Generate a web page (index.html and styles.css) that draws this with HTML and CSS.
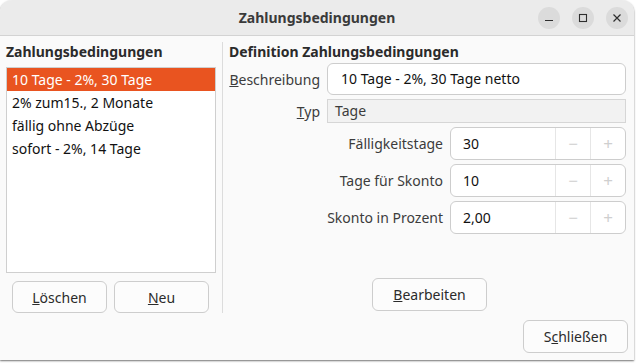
FILE: index.html
```html
<!DOCTYPE html>
<html lang="de">
<head>
    <meta charset="UTF-8">
    <title>Zahlungsbedingungen</title>
    <link rel="stylesheet" href="styles.css">
</head>
<body>
    <div class="window">
        <header class="titlebar">
            <span></span>
            <span class="title">Zahlungsbedingungen</span>
            <div class="wm-buttons">
                <span class="wm-btn">
                    <svg width="10" height="10" viewBox="0 0 10 10"><path d="M1 7.5h8" stroke="#2e2e2e" stroke-width="1.2"/></svg>
                </span>
                <span class="wm-btn">
                    <svg width="10" height="10" viewBox="0 0 10 10"><rect x="1.5" y="1.5" width="7" height="7" fill="none" stroke="#2e2e2e" stroke-width="1.1"/></svg>
                </span>
                <span class="wm-btn">
                    <svg width="10" height="10" viewBox="0 0 10 10"><path d="M1.5 1.5l7 7M8.5 1.5l-7 7" stroke="#2e2e2e" stroke-width="1.2"/></svg>
                </span>
            </div>
        </header>

        <main class="content">
            <div class="panes">
                <section class="pane-left">
                    <h2 class="heading">Zahlungsbedingungen</h2>
                    <ul class="list">
                        <li class="selected">10 Tage - 2%, 30 Tage</li>
                        <li>2% zum15., 2 Monate</li>
                        <li>fällig ohne Abzüge</li>
                        <li>sofort - 2%, 14 Tage</li>
                    </ul>
                    <div class="list-actions">
                        <button class="btn"><u>L</u>öschen</button>
                        <button class="btn"><u>N</u>eu</button>
                    </div>
                </section>

                <div class="separator"></div>

                <section class="pane-right">
                    <h2 class="heading">Definition Zahlungsbedingungen</h2>
                    <div class="form-row">
                        <label class="field-label"><u>B</u>eschreibung</label>
                        <div class="entry">10 Tage - 2%, 30 Tage netto</div>
                    </div>
                    <div class="form-row form-row-small">
                        <label class="field-label"><u>T</u>yp</label>
                        <div class="readonly">Tage</div>
                    </div>

                    <div class="spin-row">
                        <label class="field-label">Fälligkeitstage</label>
                        <div class="spin">
                            <span class="spin-value">30</span>
                            <span class="spin-btn">&minus;</span>
                            <span class="spin-btn">+</span>
                        </div>
                    </div>
                    <div class="spin-row">
                        <label class="field-label">Tage für Skonto</label>
                        <div class="spin">
                            <span class="spin-value">10</span>
                            <span class="spin-btn">&minus;</span>
                            <span class="spin-btn">+</span>
                        </div>
                    </div>
                    <div class="spin-row">
                        <label class="field-label">Skonto in Prozent</label>
                        <div class="spin">
                            <span class="spin-value">2,00</span>
                            <span class="spin-btn">&minus;</span>
                            <span class="spin-btn">+</span>
                        </div>
                    </div>

                    <div class="edit-action">
                        <button class="btn btn-edit"><u>B</u>earbeiten</button>
                    </div>
                </section>
            </div>

            <div class="footer">
                <button class="btn btn-close">S<u>c</u>hließen</button>
            </div>
        </main>
    </div>
</body>
</html>
```

FILE: styles.css
```css
html, body {
    margin: 0;
    padding: 0;
    height: 100%;
    overflow: hidden;
}
body {
    background-color: #ffffff;
    font-family: "Noto Sans", "DejaVu Sans", sans-serif;
    font-size: 14px;
    color: #1e1e1e;
}
.window {
    width: 634px;
    height: 360px;
    display: flex;
    flex-direction: column;
    background-color: #fafafa;
    border-radius: 12px 12px 0 0;
    box-shadow: 0 1px 2px rgba(0, 0, 0, 0.55);
    overflow: hidden;
}

/* Titelleiste */
.titlebar {
    height: 35px;
    flex: none;
    display: grid;
    grid-template-columns: 1fr auto 1fr;
    align-items: center;
    background-color: #ebebeb;
    border-bottom: 1px solid #d3d3d3;
}
.title {
    font-weight: bold;
    color: #3a3a3a;
}
.wm-buttons {
    display: flex;
    justify-content: flex-end;
    gap: 12px;
    padding-right: 6px;
}
.wm-btn {
    width: 22px;
    height: 22px;
    border-radius: 50%;
    background-color: #dbdbdb;
    display: flex;
    align-items: center;
    justify-content: center;
}

/* Inhalt */
.content {
    flex: 1;
    display: flex;
    flex-direction: column;
    padding: 6px 6px 7px 6px;
}
.panes {
    display: flex;
    height: 271px;
}
.heading {
    margin: 0;
    font-size: 14px;
    line-height: 20px;
    font-weight: bold;
    color: #2b2b2b;
}

.pane-left {
    width: 210px;
    display: flex;
    flex-direction: column;
}
.list {
    list-style: none;
    margin: 5px 0 0 0;
    padding: 0;
    height: 207px;
    box-sizing: border-box;
    border: 1px solid #cfcfcf;
    background-color: #ffffff;
}
.list li {
    height: 23px;
    line-height: 23px;
    padding-left: 5px;
    color: #111111;
}
.list li.selected {
    background-color: #e95420;
    color: #ffffff;
}
.list-actions {
    display: flex;
    gap: 7px;
    padding: 0 6px;
    margin-top: 8px;
}
.list-actions .btn {
    width: 95px;
}

.separator {
    width: 1px;
    background-color: #dcdcdc;
    margin: 0 6px;
}

.pane-right {
    flex: 1;
    display: flex;
    flex-direction: column;
    padding-right: 2px;
}
.field-label {
    color: #3c3c3c;
    text-align: right;
}
.form-row {
    display: flex;
    align-items: center;
    gap: 7px;
    margin-top: 1px;
}
.form-row .field-label {
    width: 91px;
}
.form-row-small {
    margin-top: 4px;
}
.entry {
    flex: 1;
    height: 32px;
    box-sizing: border-box;
    border: 1px solid #cdcdcd;
    border-radius: 6px;
    background-color: #ffffff;
    padding-left: 13px;
    line-height: 30px;
    color: #111111;
}
.readonly {
    flex: 1;
    height: 24px;
    box-sizing: border-box;
    border: 1px solid #d6d6d6;
    background-color: #f2f2f2;
    padding-left: 7px;
    line-height: 22px;
    color: #3c3c3c;
}

.spin-row {
    display: flex;
    justify-content: flex-end;
    align-items: center;
    gap: 7px;
    margin-top: 4px;
}
.spin {
    width: 176px;
    height: 33px;
    box-sizing: border-box;
    display: flex;
    border: 1px solid #cdcdcd;
    border-radius: 6px;
    background-color: #ffffff;
}
.spin-value {
    flex: 1;
    padding-left: 12px;
    line-height: 31px;
    color: #111111;
}
.spin-btn {
    width: 34px;
    border-left: 1px solid #e6e6e6;
    text-align: center;
    line-height: 31px;
    font-size: 17px;
    color: #cfcfcf;
}

.edit-action {
    margin-top: auto;
    margin-bottom: 2px;
    display: flex;
    justify-content: center;
    padding-left: 4px;
}

/* Schaltflächen */
.btn {
    height: 32px;
    box-sizing: border-box;
    border: 1px solid #cdcdcd;
    border-radius: 6px;
    background-color: #fcfcfc;
    font-family: inherit;
    font-size: 14px;
    color: #2b2b2b;
    padding: 0;
}
.btn-edit {
    width: 115px;
    height: 33px;
}
.footer {
    display: flex;
    justify-content: flex-end;
    margin-top: 7px;
}
.btn-close {
    width: 105px;
    height: 33px;
}
```
